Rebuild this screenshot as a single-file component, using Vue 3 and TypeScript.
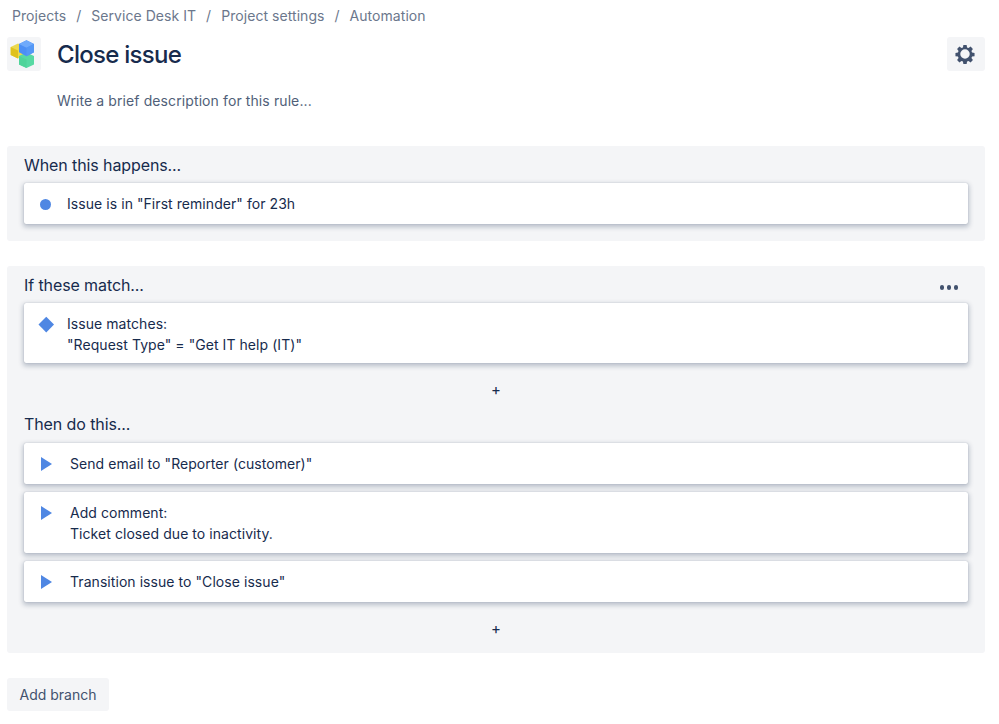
<script setup lang="ts">
const crumbs: string[] = ['Projects', 'Service Desk IT', 'Project settings', 'Automation']
</script>

<template>
  <div class="page">
    <nav class="crumbs">
      <template v-for="(c, i) in crumbs" :key="c">
        <span v-if="i > 0" class="sep">/</span>
        <span>{{ c }}</span>
      </template>
    </nav>

    <header class="head">
      <div class="logo">
        <svg width="34" height="34" viewBox="0 0 34 34">
          <path d="M3.700 10 11 6.500 16 9v9.500L11 21.500l-7.300-3.600z" fill="#EBD94F" />
          <path d="M3.700 10 11 13.600v7.900l-7.300-3.600z" fill="#E0C21C" />
          <path d="M12 19l7.500-3.600L27 19v8.400L19.500 31 12 27.400z" fill="#57D9A3" />
          <path d="M12 19l7.500 3.600V31L12 27.400z" fill="#4FD49A" />
          <path d="M12 7l7.500-3.800L27 7v8.300l-7.500 3.900L12 15.300z" fill="#4C8FF5" />
          <path d="M12 7l7.500 3.800L27 7l-7.500-3.800z" fill="#6FAAFB" />
          <path d="M19.500 10.800v8.400l7.500-3.900V7z" fill="#5498F6" />
        </svg>
      </div>
      <h1>Close issue</h1>
      <button class="gear" aria-label="Settings">
        <svg width="24" height="24" viewBox="0 0 24 24">
          <path fill="#42526E" fill-rule="evenodd" d="M10.100 1.500h3.800l.5 2.900 1.700.7 2.400-1.700 2.700 2.700-1.700 2.400.7 1.700 2.900.5v3.800l-2.900.5-.7 1.700 1.700 2.400-2.700 2.700-2.400-1.700-1.700.7-.5 2.900h-3.800l-.5-2.900-1.700-.7-2.400 1.700-2.700-2.700 1.700-2.400-.7-1.700-2.900-.5v-3.800l2.900-.5.7-1.700-1.700-2.400 2.700-2.700 2.400 1.700 1.700-.7zM12 6.500a5.500 5.500 0 1 0 0 11 5.500 5.500 0 0 0 0-11z" transform="translate(12 12) scale(.86) translate(-12 -12)" />
        </svg>
      </button>
    </header>

    <p class="desc">Write a brief description for this rule...</p>

    <section class="panel first">
      <h2>When this happens...</h2>
      <div class="card">
        <span class="mark"><i class="dot"></i></span>
        <div>Issue is in "First reminder" for 23h</div>
      </div>
    </section>

    <section class="panel second">
      <div class="title-row">
        <h2>If these match...</h2>
        <span class="more"><i></i><i></i><i></i></span>
      </div>
      <div class="card two">
        <span class="mark"><i class="diamond"></i></span>
        <div>Issue matches:<br />"Request Type" = "Get IT help (IT)"</div>
      </div>
      <div class="plus">+</div>

      <h2 class="then">Then do this...</h2>
      <div class="stack">
        <div class="card action">
          <span class="mark"><i class="tri"></i></span>
          <div>Send email to "Reporter (customer)"</div>
        </div>
        <div class="card action comment">
          <span class="mark"><i class="tri"></i></span>
          <div>Add comment:<br />Ticket closed due to inactivity.</div>
        </div>
        <div class="card action">
          <span class="mark"><i class="tri"></i></span>
          <div>Transition issue to "Close issue"</div>
        </div>
      </div>
      <div class="plus last">+</div>
    </section>

    <button class="branch">Add branch</button>
  </div>
</template>

<style scoped>
.page {
  box-sizing: border-box;
  width: 999px;
  height: 724px;
  padding: 0 14px 0 7px;
  overflow: hidden;
  background: #fff;
  font-family: Inter, "Liberation Sans", sans-serif;
  font-size: 14px;
  color: #172b4d;
}
.crumbs {
  display: flex;
  height: 31px;
  align-items: center;
  padding-left: 5px;
  color: #6b778c;
  font-size: 14px;
  letter-spacing: 0.05px;
}
.sep {
  margin: 0 10px;
}
.head {
  display: flex;
  align-items: center;
  height: 34px;
  margin-top: 6px;
}
.logo {
  width: 34px;
  height: 34px;
  border-radius: 3px;
  background: #f4f5f7;
}
.logo svg {
  display: block;
}
h1 {
  margin: 2px 0 0 16px;
  flex: 1;
  font-size: 24px;
  line-height: 34px;
  font-weight: 500;
  letter-spacing: -0.72px;
  color: #172b4d;
}
.gear {
  display: flex;
  align-items: center;
  justify-content: center;
  width: 38px;
  height: 34px;
  padding: 0 2px 1px 0;
  border: 0;
  border-radius: 3px;
  background: #f4f5f7;
}
.desc {
  margin: 20px 0 0 50px;
  line-height: 20px;
  letter-spacing: 0.1px;
  color: #505f79;
}
.panel {
  padding: 0 17px;
  border-radius: 3px;
  background: #f4f5f7;
}
.first {
  margin-top: 35px;
  padding-bottom: 17px;
}
.second {
  margin-top: 25px;
  padding-bottom: 0;
  height: 387px;
  box-sizing: border-box;
}
h2 {
  margin: 0;
  height: 37px;
  font-size: 16px;
  line-height: 38px;
  font-weight: 400;
  letter-spacing: -0.1px;
  color: #172b4d;
}
.title-row {
  display: flex;
  justify-content: space-between;
}
.more {
  display: flex;
  gap: 2.500px;
  height: 5px;
  margin: 19px 10px 0 0;
}
.more i {
  width: 4.500px;
  height: 4.500px;
  border-radius: 50%;
  background: #42526e;
}
.card {
  display: flex;
  align-items: flex-start;
  box-sizing: border-box;
  padding: 10px 12px 10px 16px;
  line-height: 21px;
  letter-spacing: 0.06px;
  background: #fff;
  border-radius: 2px;
  box-shadow: 0 2px 5px 1px rgba(9, 30, 66, 0.25), 0 0 1px rgba(9, 30, 66, 0.3);
}
.two {
  padding-bottom: 8px;
}
.comment {
  padding-bottom: 9px;
}
.mark {
  display: flex;
  align-items: center;
  justify-content: center;
  flex: none;
  width: 12px;
  height: 20px;
  margin-top: 1px;
  margin-right: 15px;
}
.action .mark {
  margin-right: 18px;
}
.dot {
  width: 11px;
  height: 11px;
  margin-left: -1px;
  border-radius: 50%;
  background: #4f87e3;
}
.diamond {
  width: 10.500px;
  height: 10.500px;
  transform: rotate(45deg);
  background: #4f87e3;
}
.tri {
  width: 13px;
  height: 14px;
  margin-left: 1px;
  clip-path: polygon(0 0, 100% 50%, 0 100%);
  background: #4f87e3;
}
.plus {
  height: 24px;
  margin-top: 15px;
  text-align: center;
  font-size: 15px;
  line-height: 24px;
  font-weight: 400;
}
.second .then {
  margin-top: 8px;
  height: 33px;
  line-height: 28px;
}
.stack {
  display: flex;
  flex-direction: column;
  gap: 8px;
}
.branch {
  display: block;
  width: 102px;
  height: 33px;
  margin-top: 25px;
  padding: 0;
  border: 0;
  border-radius: 3px;
  background: #f4f5f7;
  color: #42526e;
  font: 400 14px Inter, "Liberation Sans", sans-serif;
}
</style>
